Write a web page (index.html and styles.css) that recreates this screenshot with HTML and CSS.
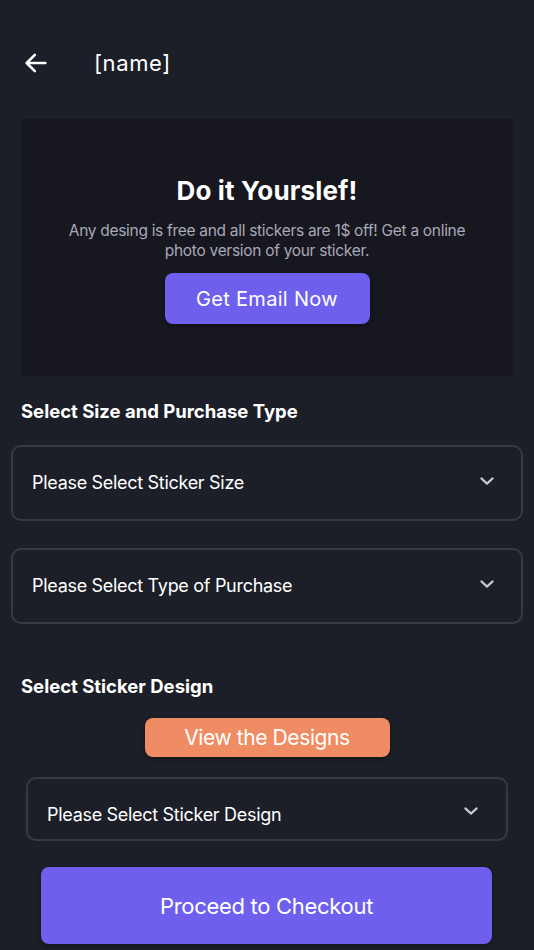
FILE: index.html
```html
<!DOCTYPE html>
<html>
<head>
<meta charset="utf-8">
<link rel="stylesheet" href="styles.css">
</head>
<body>
<div class="page">
  <header class="topbar">
    <svg class="back" width="28" height="28" viewBox="0 0 24 24" fill="none" stroke="#ffffff" stroke-width="2.2" stroke-linecap="round" stroke-linejoin="round"><path d="M20 12H4.5M11 5l-7 7 7 7"/></svg>
    <span class="title">[name]</span>
  </header>

  <section class="banner">
    <h1>Do it Yourslef!</h1>
    <p>Any desing is free and all stickers are 1$ off! Get a online photo version of your sticker.</p>
    <button class="btn btn-email">Get Email Now</button>
  </section>

  <h2 class="section-title first">Select Size and Purchase Type</h2>
  <div class="select wide">
    <span>Please Select Sticker Size</span>
    <svg class="chev" width="18" height="18" viewBox="0 0 24 24" fill="none" stroke="#c9c9d6" stroke-width="2.8" stroke-linecap="round" stroke-linejoin="round"><path d="M4.5 8.5l7.5 7 7.5-7"/></svg>
  </div>
  <div class="select wide second">
    <span>Please Select Type of Purchase</span>
    <svg class="chev" width="18" height="18" viewBox="0 0 24 24" fill="none" stroke="#c9c9d6" stroke-width="2.8" stroke-linecap="round" stroke-linejoin="round"><path d="M4.5 8.5l7.5 7 7.5-7"/></svg>
  </div>

  <h2 class="section-title design">Select Sticker Design</h2>
  <div class="center">
    <button class="btn btn-view">View the Designs</button>
  </div>
  <div class="select narrow">
    <span>Please Select Sticker Design</span>
    <svg class="chev" width="18" height="18" viewBox="0 0 24 24" fill="none" stroke="#c9c9d6" stroke-width="2.8" stroke-linecap="round" stroke-linejoin="round"><path d="M4.5 8.5l7.5 7 7.5-7"/></svg>
  </div>
  <button class="btn btn-checkout">Proceed to Checkout</button>
</div>
</body>
</html>
```

FILE: styles.css
```css
* { box-sizing: border-box; }
html, body {
  margin: 0;
  padding: 0;
  background: #1d1f28;
  font-family: "Inter", "Lato", sans-serif;
  color: #ffffff;
}
.page {
  width: 534px;
  height: 950px;
  overflow: hidden;
  display: flex;
  flex-direction: column;
}
.topbar {
  display: flex;
  align-items: center;
  height: 44px;
  margin-top: 41px;
  padding-left: 22px;
}
.back { display: block; }
.title {
  margin-left: 44px;
  font-size: 22px;
  font-weight: 400;
  letter-spacing: 0.6px;
}
.banner {
  margin: 34px 21px 0 21px;
  height: 257px;
  background: #17171f;
  display: flex;
  flex-direction: column;
  align-items: center;
  padding-top: 55px;
}
.banner h1 {
  margin: 0;
  font-size: 26px;
  font-weight: 700;
  letter-spacing: 0.15px;
  line-height: 34px;
}
.banner p {
  margin: 13px 0 0 0;
  width: 420px;
  text-align: center;
  font-size: 15.5px;
  line-height: 20px;
  color: #a9a9b8;
  letter-spacing: -0.3px;
}
.btn {
  border: none;
  font-family: inherit;
  color: #ffffff;
  cursor: pointer;
  border-radius: 8px;
}
.btn-email {
  margin-top: 12px;
  width: 205px;
  height: 51px;
  background: #6e5fec;
  font-size: 20px;
  letter-spacing: 0.3px;
  box-shadow: 0 2px 4px rgba(0,0,0,0.35);
}
.section-title {
  margin: 0;
  padding-left: 21px;
  font-size: 18.5px;
  font-weight: 700;
  letter-spacing: 0px;
  line-height: 24px;
}
.section-title.first { margin-top: 23px; }
.select {
  display: flex;
  align-items: center;
  justify-content: space-between;
  border: 2px solid #373945;
  border-radius: 10px;
  font-size: 18px;
  letter-spacing: -0.3px;
  color: #ffffff;
}
.select.wide {
  margin: 22px 11px 0 11px;
  height: 76px;
  padding: 0 25px 0 19px;
}
.select.wide span { margin-top: -2px; }
.select.wide .chev { margin-top: -4px; }
.select.wide.second { margin-top: 27px; }
.section-title.design { margin-top: 50px; }
.center {
  display: flex;
  justify-content: center;
  margin-top: 20px;
}
.btn-view {
  width: 245px;
  height: 39px;
  background: #ef8c63;
  font-size: 21px;
  letter-spacing: -0.4px;
  box-shadow: 0 2px 4px rgba(0,0,0,0.35);
}
.select.narrow {
  margin: 20px 26px 0 26px;
  height: 64px;
  padding: 0 26px 0 19px;
}
.select.narrow span { margin-top: 10px; }
.select.narrow .chev { margin-top: 4px; }
.btn-checkout {
  margin: 26px 42px 0 41px;
  height: 77px;
  background: #6e5fec;
  font-size: 22px;
  letter-spacing: -0.3px;
  box-shadow: 0 2px 4px rgba(0,0,0,0.35);
}
```
